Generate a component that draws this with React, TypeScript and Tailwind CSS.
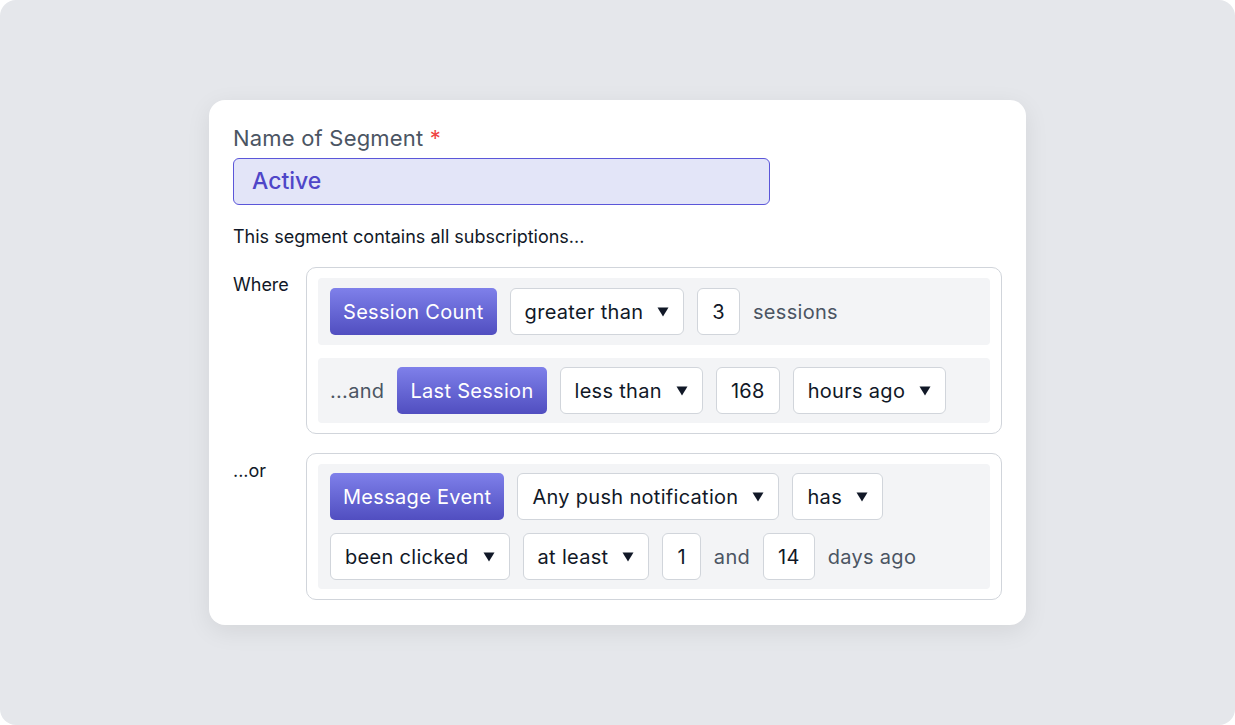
import React from "react"

const Caret = () => (
  <svg width="12" height="10" viewBox="0 0 12 10" className="shrink-0">
    <path d="M0.5 0.5 H11.5 L6 9.5 Z" fill="#111827" />
  </svg>
)

const Field = ({ children }: { children: React.ReactNode }) => (
  <div className="h-[47px] flex items-center gap-[14px] px-[14px] bg-white border border-[#d1d5db] rounded-[6px] text-[20px] tracking-[0.3px] text-[#111827] whitespace-nowrap">
    {children}
  </div>
)

const Select = ({ label }: { label: string }) => (
  <Field>
    <span>{label}</span>
    <Caret />
  </Field>
)

const Tag = ({ label }: { label: string }) => (
  <div className="h-[47px] flex items-center px-[13px] rounded-[5px] bg-gradient-to-b from-[#7f80ea] to-[#514ec0] text-white text-[20px] tracking-[0.3px] whitespace-nowrap">
    {label}
  </div>
)

const Muted = ({ children }: { children: React.ReactNode }) => (
  <span className="text-[20px] tracking-[0.3px] text-[#4b5563] whitespace-nowrap">{children}</span>
)

const Group = ({ label, children }: { label: string; children: React.ReactNode }) => (
  <div className="flex">
    <div className="w-[73px] pt-[4px] text-[18px] text-[#111827]">{label}</div>
    <div className="flex-1 border border-[#d1d5db] rounded-[10px] px-[11px] py-[10px] flex flex-col gap-[13px]">
      {children}
    </div>
  </div>
)

export default function App() {
  return (
    <div className="w-[1235px] h-[725px] bg-white">
      <div
        className="w-full h-full rounded-[16px] bg-[#e5e7eb] flex items-center justify-center"
        style={{ fontFamily: "Inter, 'Noto Sans', sans-serif" }}
      >
        <div className="w-[817px] bg-white rounded-[16px] shadow-[0_6px_24px_rgba(0,0,0,0.08)] px-[24px] pt-[22px] pb-[25px]">
          <div className="text-[22px] text-[#4b5563] leading-[32px] tracking-[0.2px]">
            Name of Segment <span className="text-[#ef4444]">*</span>
          </div>
          <div className="mt-[4px] w-[537px] h-[47px] flex items-center px-[18px] bg-[#e3e5f8] border border-[#5b56d9] rounded-[6px] text-[23px] font-medium text-[#4f46c8]">
            Active
          </div>
          <div className="mt-[20px] text-[18px] text-[#111827] leading-[24px]">
            This segment contains all subscriptions...
          </div>
          <div className="mt-[18px] flex flex-col gap-[19px]">
            <Group label="Where">
              <div className="bg-[#f3f4f6] rounded-[4px] px-[12px] py-[10px] flex items-center gap-[13px]">
                <Tag label="Session Count" />
                <Select label="greater than" />
                <Field>3</Field>
                <Muted>sessions</Muted>
              </div>
              <div className="bg-[#f3f4f6] rounded-[4px] px-[12px] py-[9px] flex items-center gap-[13px]">
                <Muted>...and</Muted>
                <Tag label="Last Session" />
                <Select label="less than" />
                <Field>168</Field>
                <Select label="hours ago" />
              </div>
            </Group>
            <Group label="...or">
              <div className="bg-[#f3f4f6] rounded-[4px] px-[12px] py-[9px] flex flex-wrap items-center gap-x-[13px] gap-y-[13px]">
                <Tag label="Message Event" />
                <Select label="Any push notification" />
                <Select label="has" />
                <Select label="been clicked" />
                <Select label="at least" />
                <Field>1</Field>
                <Muted>and</Muted>
                <Field>14</Field>
                <Muted>days ago</Muted>
              </div>
            </Group>
          </div>
        </div>
      </div>
    </div>
  )
}
